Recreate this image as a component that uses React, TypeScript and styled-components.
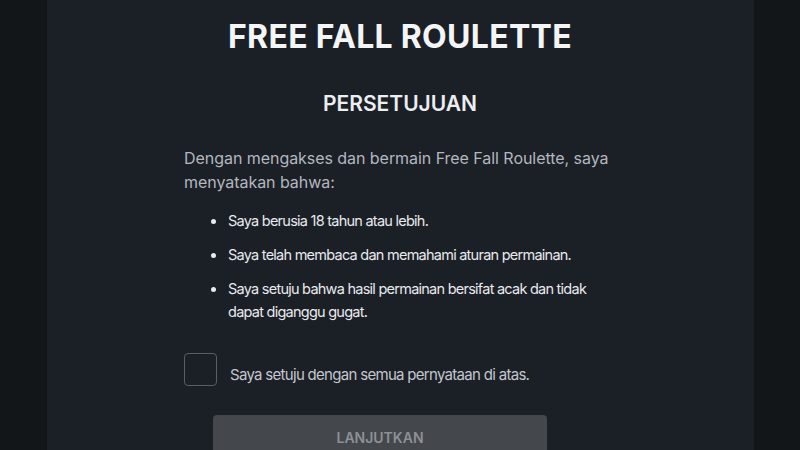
import React from 'react';
import styled, {createGlobalStyle} from 'styled-components';

const GlobalStyle = createGlobalStyle`
  html, body {
    margin: 0;
    padding: 0;
    height: 100%;
    background: #121619;
    overflow: hidden;
  }
  #root {
    height: 100%;
  }
  * {
    box-sizing: border-box;
  }
`

const items = [
    'Saya berusia 18 tahun atau lebih.',
    'Saya telah membaca dan memahami aturan permainan.',
    'Saya setuju bahwa hasil permainan bersifat acak dan tidak dapat diganggu gugat.',
];

export default function App() {
    return (
        <>
            <GlobalStyle/>
            <Page>
                <Panel>
                    <Title>FREE FALL ROULETTE</Title>
                    <Content>
                        <Subtitle>PERSETUJUAN</Subtitle>
                        <Intro>Dengan mengakses dan bermain Free Fall Roulette, saya menyatakan bahwa:</Intro>
                        <Terms>
                            {items.map(item => <Term key={item}>{item}</Term>)}
                        </Terms>
                        <AgreeRow>
                            <Checkbox type="checkbox"/>
                            <AgreeLabel>Saya setuju dengan semua pernyataan di atas.</AgreeLabel>
                        </AgreeRow>
                        <ContinueButton disabled>LANJUTKAN</ContinueButton>
                    </Content>
                </Panel>
            </Page>
        </>
    );
}

const Page = styled.div`
  height: 100%;
  display: flex;
  justify-content: center;
  font-family: Inter, "Noto Sans", sans-serif;
`

const Panel = styled.main`
  width: 707px;
  height: 100%;
  background: #1b1f26;
  padding-top: 17px;
  display: flex;
  flex-direction: column;
  align-items: center;
`

const Title = styled.h1`
  margin: 0;
  font-size: 32px;
  line-height: 40px;
  font-weight: 700;
  letter-spacing: 0.3px;
  color: #f4f5f7;
`

const Content = styled.section`
  width: 432px;
  display: flex;
  flex-direction: column;
`

const Subtitle = styled.h2`
  margin: 32px 0 0;
  text-align: center;
  font-size: 21px;
  line-height: 30px;
  font-weight: 600;
  color: #eceef1;
`

const Intro = styled.p`
  margin: 27px 0 0;
  font-size: 16px;
  line-height: 24px;
  letter-spacing: -0.05px;
  color: #b3b7be;
`

const Terms = styled.ul`
  margin: 15px 0 0;
  padding-left: 44px;
  display: flex;
  flex-direction: column;
  gap: 11px;
`

const Term = styled.li`
  font-size: 14.5px;
  line-height: 23px;
  letter-spacing: -0.75px;
  color: #e8eaed;
  &::marker {
    font-size: 17px;
    letter-spacing: 0;
  }
`

const AgreeRow = styled.label`
  margin-top: 30px;
  display: flex;
  align-items: flex-start;
  gap: 13px;
  cursor: pointer;
`

const Checkbox = styled.input`
  appearance: none;
  margin: 0;
  width: 33px;
  height: 33px;
  flex-shrink: 0;
  border: 1.5px solid #5a5e63;
  border-radius: 4px;
  background: transparent;
`

const AgreeLabel = styled.span`
  margin-top: 10px;
  font-size: 15px;
  line-height: 24px;
  letter-spacing: -0.7px;
  color: #c3c7cd;
`

const ContinueButton = styled.button`
  margin: 28px 0 0 29px;
  width: 334px;
  height: 44px;
  border: none;
  border-radius: 4px;
  background: #44484c;
  color: #8d9196;
  font-family: Inter, "Noto Sans", sans-serif;
  font-size: 14px;
  font-weight: 600;
  letter-spacing: 0;
`
